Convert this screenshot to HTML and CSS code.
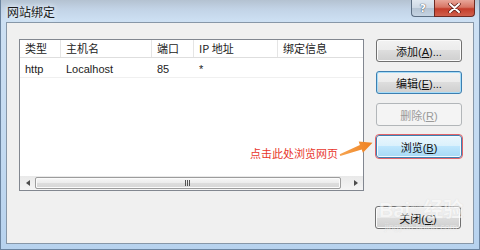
FILE: index.html
```html
<!DOCTYPE html>
<html lang="zh">
<head>
<meta charset="utf-8">
<title>网站绑定</title>
<link rel="stylesheet" href="styles.css">
</head>
<body>
<div class="window">
  <div class="titlebar">
    <span class="title">网站绑定</span>
    <div class="caption">
      <span class="cap-btn help">?</span>
      <span class="cap-btn close">
        <svg width="13" height="10" viewBox="0 0 13 10"><path d="M2 1 L11 9 M11 1 L2 9" stroke="#5a1a14" stroke-width="3.4" stroke-linecap="round"/><path d="M2 1 L11 9 M11 1 L2 9" stroke="#fff" stroke-width="2" stroke-linecap="round"/></svg>
      </span>
    </div>
  </div>
  <div class="client">
    <div class="main">
      <div class="listview">
        <div class="lv-head">
          <span class="cell">类型</span>
          <span class="cell">主机名</span>
          <span class="cell">端口</span>
          <span class="cell">IP 地址</span>
          <span class="cell last">绑定信息</span>
        </div>
        <div class="lv-row">
          <span class="cell">http</span>
          <span class="cell">Localhost</span>
          <span class="cell">85</span>
          <span class="cell">*</span>
          <span class="cell"></span>
        </div>
        <div class="lv-fill"></div>
        <div class="hscroll">
          <span class="sb-arrow"><span class="tri left"></span></span>
          <span class="thumb"><span class="grip"></span></span>
          <span class="sb-arrow"><span class="tri right"></span></span>
        </div>
      </div>
      <div class="btns">
        <button class="btn">添加(<u>A</u>)...</button>
        <button class="btn focus">编辑(<u>E</u>)...</button>
        <button class="btn disabled">删除(<u>R</u>)</button>
        <button class="btn hover marked">浏览(<u>B</u>)</button>
      </div>
    </div>
    <div class="footer">
      <button class="btn close-btn">关闭(<u>C</u>)</button>
    </div>
  </div>

  <span class="note">点击此处浏览网页</span>
  <svg class="arrow" width="480" height="250" viewBox="0 0 480 250">
    <defs>
      <linearGradient id="ag" x1="0" y1="0" x2="1" y2="0">
        <stop offset="0" stop-color="#f6a552"/>
        <stop offset="1" stop-color="#ef7f1e"/>
      </linearGradient>
    </defs>
    <polygon points="339.7,154.3 359.9,144.9 358.7,141.6 372.5,142.8 362.9,152.8 361.7,149.5 340.3,155.9" fill="url(#ag)"/>
  </svg>

  <div class="watermark">
    <span class="wm-main">Bai<span class="wm-paw">❀</span>经验</span>
    <span class="wm-url">jingyan.baidu.com</span>
  </div>
</div>
</body>
</html>
```
FILE: styles.css
```css
* { box-sizing: border-box; }
html, body { margin: 0; padding: 0; }
body {
  width: 480px;
  height: 250px;
  overflow: hidden;
  font-family: "Liberation Sans", "Noto Sans CJK SC", sans-serif;
  font-size: 11px;
  color: #000;
}
.window {
  position: relative;
  width: 480px;
  height: 250px;
  display: flex;
  flex-direction: column;
  border: 1px solid #6b84a0;
  border-top: none;
  background: linear-gradient(180deg, #b4c2d1 0px, #c2d3e6 9px, #cde0f3 21px, #c3daf1 60%, #b7d2ee 100%);
}
.titlebar {
  height: 22px;
  display: flex;
  justify-content: space-between;
  align-items: flex-start;
  padding-left: 6px;
  padding-right: 4px;
}
.title {
  font-family: "Noto Sans CJK SC", sans-serif;
  font-size: 12px;
  line-height: 12px;
  margin-top: 6px;
  color: #1a1a1a;
  text-shadow: 0 0 4px #eef5fc, 0 0 6px #eef5fc;
}
.caption { display: flex; }
.cap-btn {
  height: 17px;
  display: flex;
  align-items: center;
  justify-content: center;
  border: 1px solid #5b6d82;
  border-top: none;
}
.cap-btn.help {
  width: 23px;
  border-radius: 0 0 0 4px;
  border-right: none;
  background: linear-gradient(180deg, #e0e8f0 0%, #cdd8e4 50%, #b4c3d3 50%, #c5d3e2 100%);
  color: #fff;
  font-family: "DejaVu Sans", sans-serif;
  font-weight: bold;
  font-size: 11px;
  text-shadow: 0 0 1px #3c4a5a, 0 0 1px #3c4a5a;
}
.cap-btn.close {
  width: 41px;
  border-radius: 0 0 4px 0;
  border-color: #6e2a22;
  background: linear-gradient(180deg, #e8a699 0%, #d77564 45%, #c43d2b 55%, #d0604c 100%);
}
.client {
  flex: 1;
  margin: 0 5px 5px 5px;
  border: 1px solid #8797a8;
  background: #f0f0f0;
  display: flex;
  flex-direction: column;
  padding: 16px 11px 14px 12px;
}
.main {
  display: flex;
  gap: 12px;
}
.listview {
  width: 345px;
  height: 152px;
  border: 1px solid #828790;
  background: #fff;
  display: flex;
  flex-direction: column;
}
.lv-head, .lv-row {
  display: grid;
  grid-template-columns: 41px 91px 42px 84px 1fr;
}
.lv-head {
  height: 18px;
  border-bottom: 1px solid #dedede;
  font-family: "Noto Sans CJK SC", sans-serif;
  font-size: 11px;
}
.lv-head .cell {
  border-right: 1px solid #e5e5e5;
  line-height: 17px;
  padding-left: 5px;
  color: #222;
}
.lv-head .cell.last { border-right: none; }
.lv-row {
  height: 20px;
  border-bottom: 1px solid #f0f0f0;
}
.lv-row .cell {
  line-height: 22px;
  padding-left: 5px;
  color: #222;
}
.lv-fill { flex: 1; }
.hscroll {
  height: 14px;
  display: flex;
  align-items: stretch;
  background: linear-gradient(180deg, #e9e9e9, #f5f5f5);
}
.sb-arrow {
  width: 15px;
  display: flex;
  align-items: center;
  justify-content: center;
}
.hscroll .sb-arrow:last-child { margin-left: 7px; }
.tri {
  width: 0;
  height: 0;
  border-top: 3px solid transparent;
  border-bottom: 3px solid transparent;
}
.tri.left { border-right: 4px solid #4d4d4d; }
.tri.right { border-left: 4px solid #4d4d4d; }
.thumb {
  flex: 1;
  margin: 1px 0;
  border: 1px solid #9c9c9c;
  border-radius: 2px;
  background: linear-gradient(180deg, #f7f7f7 0%, #ececec 50%, #dedede 50%, #d6d6d6 100%);
  box-shadow: inset 0 0 0 1px #fbfbfb;
  display: flex;
  align-items: center;
  justify-content: center;
}
.grip {
  width: 6px;
  height: 6px;
  background: repeating-linear-gradient(90deg, #555 0 1px, transparent 1px 2px);
}
.btns {
  display: flex;
  flex-direction: column;
  gap: 9px;
}
.btn {
  width: 86px;
  height: 23px;
  padding: 0;
  font-family: "Liberation Sans", "Noto Sans CJK SC", sans-serif;
  font-size: 11px;
  color: #111;
  border: 1px solid #707070;
  border-radius: 3px;
  background: linear-gradient(180deg, #f2f2f2 0%, #ebebeb 50%, #dddddd 50%, #cfcfcf 100%);
  box-shadow: inset 0 0 0 1px #fbfbfb;
}
.btn u { text-decoration: underline; text-underline-offset: 1px; }
.btn.focus {
  border-color: #3c7fb1;
  box-shadow: inset 0 0 0 1px #a6dcf8;
}
.btn.disabled {
  border-color: #b2b6b9;
  background: #f4f4f4;
  color: #9a9a9a;
  box-shadow: none;
}
.btn.hover {
  border-color: #3c7fb1;
  background: linear-gradient(180deg, #eaf6fd 0%, #d9f0fc 50%, #bee6fd 50%, #a7d9f5 100%);
  box-shadow: inset 0 0 0 1px #f2fafe;
}
.btn.marked {
  outline: 1px solid #e2646a;
  outline-offset: 0;
}
.footer {
  margin-top: auto;
  display: flex;
  justify-content: flex-end;
}
.close-btn { margin-right: 1px; }
.note {
  position: absolute;
  left: 249px;
  top: 147px;
  font-family: "Noto Sans CJK SC", sans-serif;
  font-size: 11px;
  line-height: 13px;
  color: #e8362c;
}
.arrow {
  position: absolute;
  left: -1px;
  top: 0;
  pointer-events: none;
}
.watermark {
  position: absolute;
  left: 378px;
  top: 198px;
  display: flex;
  flex-direction: column;
  align-items: center;
  pointer-events: none;
  opacity: 0.55;
}
.wm-main {
  font-family: "Liberation Sans", "Noto Sans CJK SC", sans-serif;
  font-weight: bold;
  font-size: 20px;
  line-height: 24px;
  color: #fcfcfc;
  text-shadow: 0 0 1px #c4c4c4;
  letter-spacing: 0;
}
.wm-paw { font-size: 13px; vertical-align: top; }
.wm-url {
  font-family: "Liberation Sans", sans-serif;
  font-size: 9px;
  line-height: 10px;
  color: #f5f5f5;
  text-shadow: 0 0 1px #c8c8c8;
}
```
